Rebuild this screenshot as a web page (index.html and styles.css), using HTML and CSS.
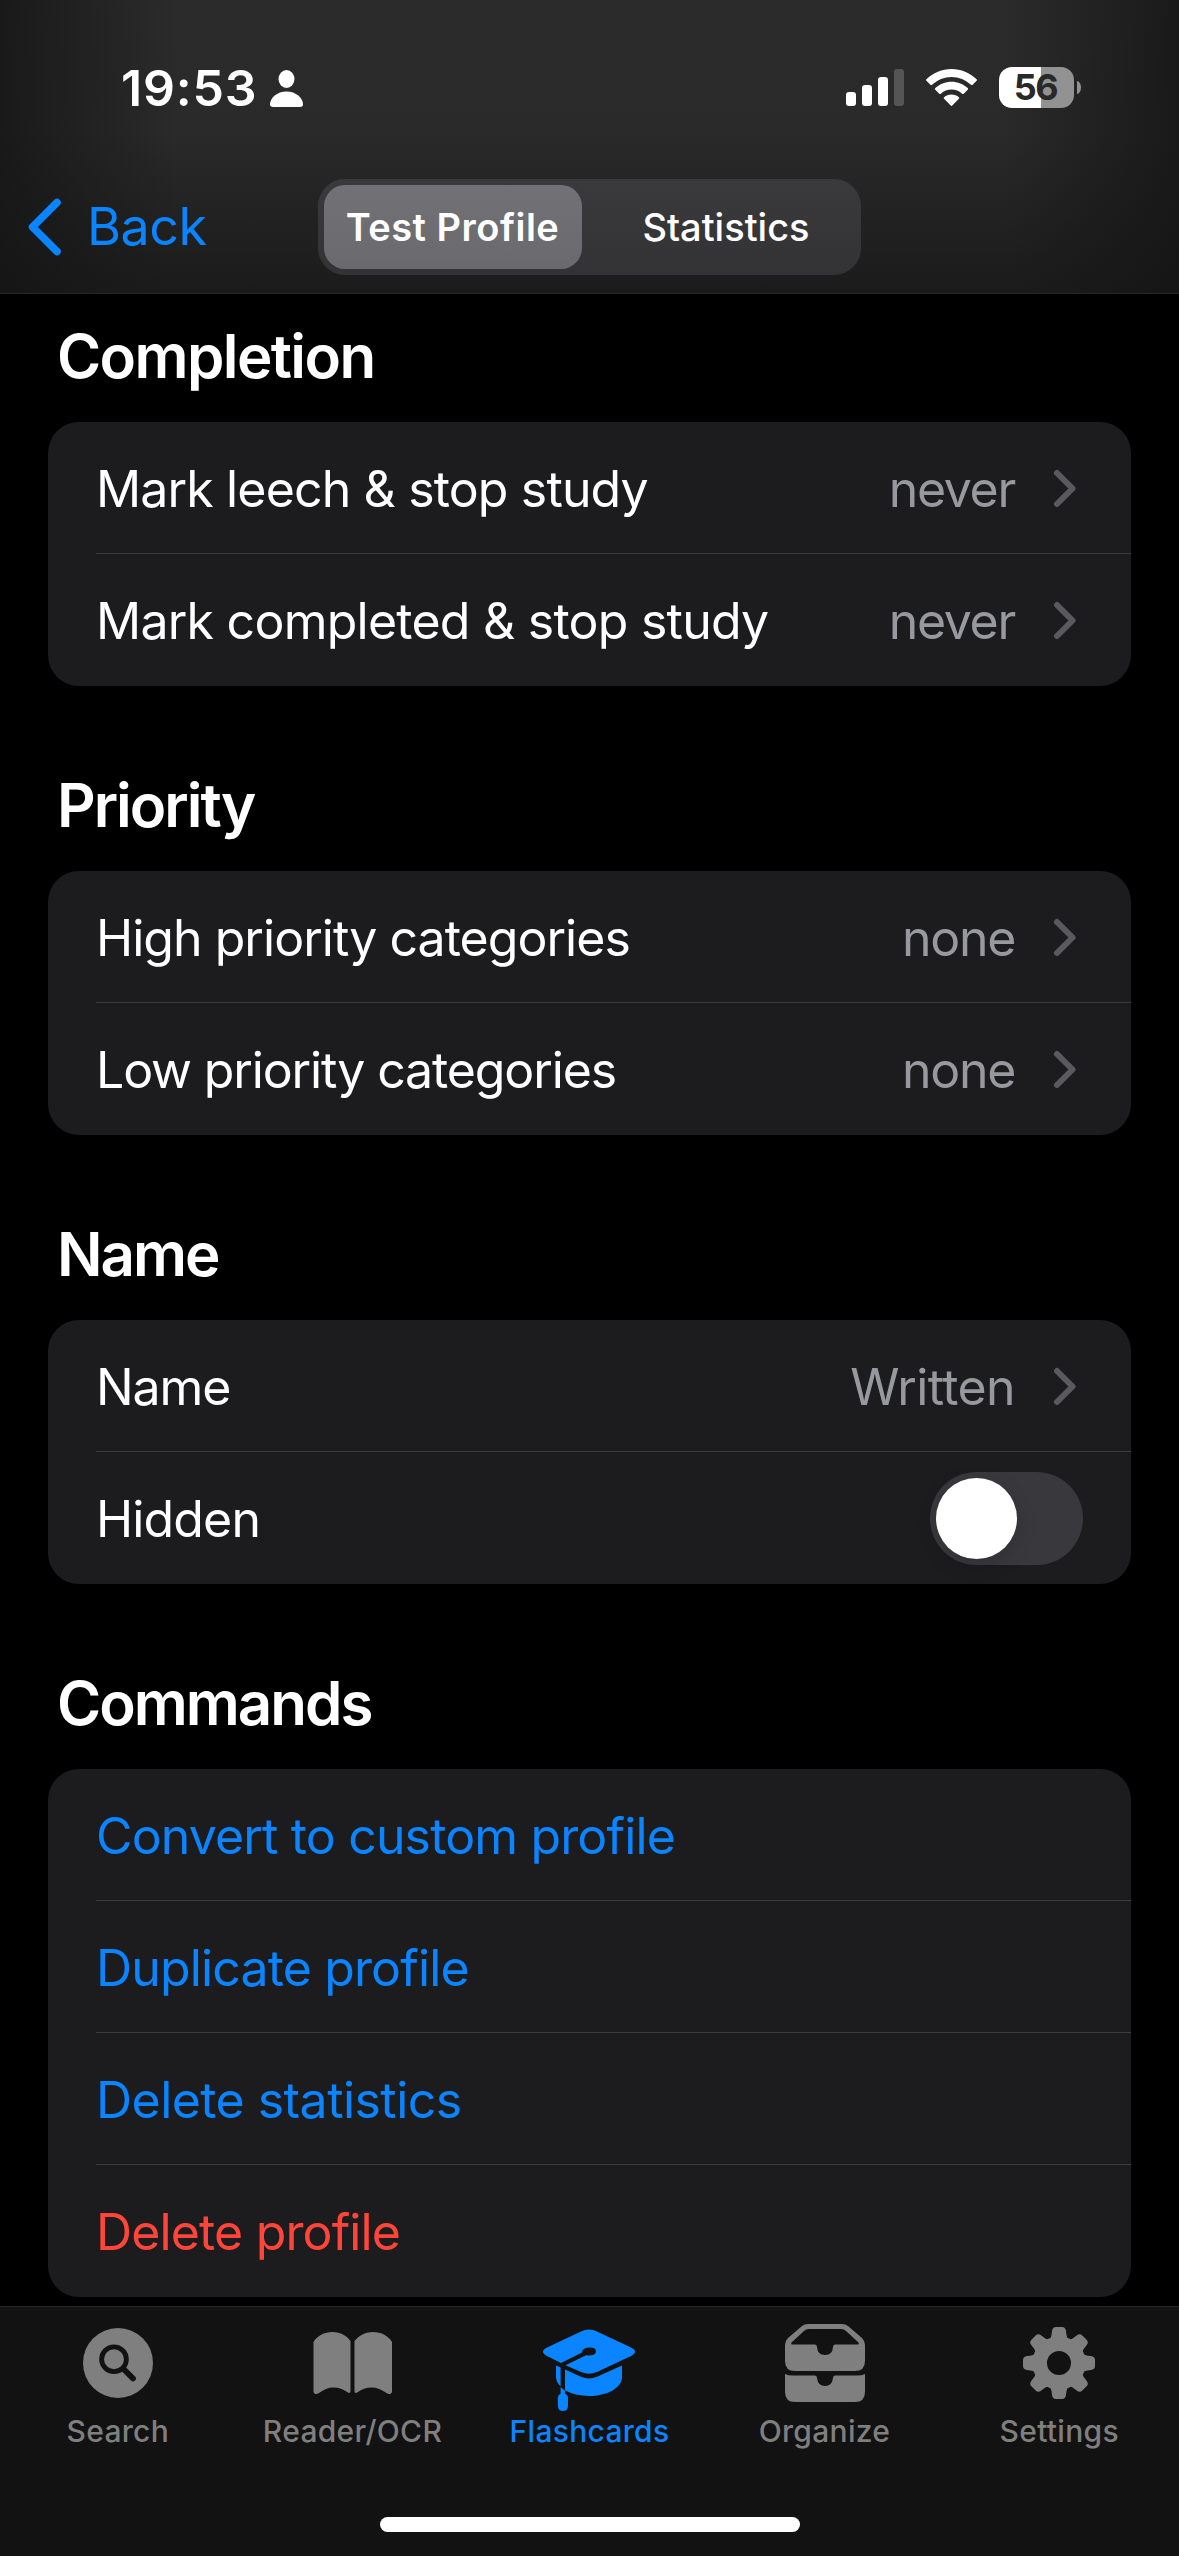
FILE: index.html
```html
<!DOCTYPE html>
<html lang="en">
<head>
<meta charset="utf-8">
<title>Test Profile</title>
<link rel="stylesheet" href="styles.css">
</head>
<body>
<div class="screen">
  <header class="header">
    <div class="status">
      <div class="status-left">
        <span class="time">19:53</span>
        <svg class="person" width="33" height="37" viewBox="0 0 33 37" fill="#fff"><ellipse cx="16.500" cy="9" rx="8" ry="9"/><path d="M3 37C1 37 0 36 0 34.500C0 28 7 21.500 16.500 21.500S33 28 33 34.500C33 36 32 37 30 37Z"/></svg>
      </div>
      <div class="status-right">
        <svg class="signal" width="58" height="37" viewBox="0 0 58 37" fill="#fff"><rect x="0" y="23" width="10" height="14" rx="3"/><rect x="16" y="16" width="10" height="21" rx="3"/><rect x="32" y="8" width="10" height="29" rx="3"/><rect x="48" y="0" width="10" height="37" rx="3" fill="#555556"/></svg>
        <svg class="wifi" width="51" height="37" viewBox="0 0 51 37" fill="#fff"><path d="M25.500 0C16 0 7 3.800.4 10.200a1.100 1.100 0 0 0 0 1.600l4 4a1.100 1.100 0 0 0 1.600 0A28 28 0 0 1 45 15.800a1.100 1.100 0 0 0 1.600 0l4-4a1.100 1.100 0 0 0 0-1.600C44 3.800 35 0 25.500 0Z"/><path d="M25.500 12.800c-6.200 0-11.900 2.400-16.200 6.300a1.100 1.100 0 0 0 0 1.600l4 4a1.200 1.200 0 0 0 1.600 0 15.800 15.800 0 0 1 21.200 0 1.200 1.200 0 0 0 1.600 0l4-4a1.100 1.100 0 0 0 0-1.600c-4.300-3.900-10-6.300-16.200-6.300Z"/><path d="M25.500 25.500c-2.800 0-5.400 1-7.400 2.700a1.100 1.100 0 0 0 0 1.600l6.600 6.700a1.100 1.100 0 0 0 1.600 0l6.600-6.700a1.100 1.100 0 0 0 0-1.600c-2-1.700-4.600-2.700-7.400-2.700Z"/></svg>
        <div class="battery"><span class="battery-level">56</span></div>
        <div class="battery-cap"></div>
      </div>
    </div>
    <nav class="navbar">
      <a class="back"><svg width="35" height="58" viewBox="0 0 35 58"><path d="M30 4.500 5.500 29 30 53.500" fill="none" stroke="#0a84ff" stroke-width="7.500" stroke-linecap="round" stroke-linejoin="round"/></svg><span>Back</span></a>
      <div class="segmented">
        <div class="segment selected">Test Profile</div>
        <div class="segment">Statistics</div>
      </div>
    </nav>
  </header>

  <main class="content">
    <section>
      <h2>Completion</h2>
      <div class="card">
        <div class="row"><span class="label">Mark leech &amp; stop study</span><span class="value">never</span><svg class="chevron" viewBox="0 0 22 37"><path d="M3 3 18.500 18.500 3 34"/></svg></div>
        <div class="row"><span class="label wide">Mark completed &amp; stop study</span><span class="value">never</span><svg class="chevron" viewBox="0 0 22 37"><path d="M3 3 18.500 18.500 3 34"/></svg></div>
      </div>
    </section>
    <section>
      <h2 class="tight">Priority</h2>
      <div class="card">
        <div class="row"><span class="label tight">High priority categories</span><span class="value">none</span><svg class="chevron" viewBox="0 0 22 37"><path d="M3 3 18.500 18.500 3 34"/></svg></div>
        <div class="row"><span class="label tighter">Low priority categories</span><span class="value">none</span><svg class="chevron" viewBox="0 0 22 37"><path d="M3 3 18.500 18.500 3 34"/></svg></div>
      </div>
    </section>
    <section>
      <h2 class="tight">Name</h2>
      <div class="card">
        <div class="row"><span class="label tighter">Name</span><span class="value loose">Written</span><svg class="chevron" viewBox="0 0 22 37"><path d="M3 3 18.500 18.500 3 34"/></svg></div>
        <div class="row"><span class="label">Hidden</span><div class="switch"><div class="knob"></div></div></div>
      </div>
    </section>
    <section>
      <h2 class="tight">Commands</h2>
      <div class="card">
        <div class="row"><span class="label link">Convert to custom profile</span></div>
        <div class="row"><span class="label link">Duplicate profile</span></div>
        <div class="row"><span class="label link loose">Delete statistics</span></div>
        <div class="row"><span class="label danger">Delete profile</span></div>
      </div>
    </section>
  </main>

  <footer class="tabbar">
    <div class="tabs">
      <div class="tab">
        <svg width="100" height="90" viewBox="0 0 100 90"><circle cx="50" cy="45" r="35" fill="#7f7f7f"/><circle cx="46" cy="41.300" r="12.400" fill="none" stroke="#121212" stroke-width="4.800"/><path d="M55.500 51 65 60.500" stroke="#121212" stroke-width="5.800" stroke-linecap="round"/></svg>
        <span>Search</span>
      </div>
      <div class="tab">
        <svg width="100" height="90" viewBox="0 0 100 90" fill="#7f7f7f"><path d="M10.500 24C14 18 21 14 29.500 14S44 18 47.500 23V73c0 2-1.500 2.500-3 1.300C40 71 36 69.500 30.500 69.500S21 71.500 16 75C13.500 77 10.500 76 10.500 73.500Z"/><path d="M89 24C85.500 18 78.500 14 70 14S55.500 18 51.500 23V73c0 2 1.500 2.500 3 1.300C59 71 63 69.500 68.500 69.500S78.500 71.500 83.500 75C86 77 89 76 89 73.500Z"/></svg>
        <span>Reader/OCR</span>
      </div>
      <div class="tab active">
        <svg width="108" height="90" viewBox="1 0 108 90" fill="#0a84ff"><path d="M46 13.500Q54 9.500 62 13.500L96 29.500Q104 33.500 96 38L62 54Q54 57.500 46 54L30.500 47.300 51 37.300Q61 38 61 33.500T54 29.500 47 34.500L26 45 12 38Q4 33.500 12 29.500Z"/><path d="M21 47.500 25.600 49.600V68.500Q21 64 21 59Z"/><path d="M30 51.500 46 58.800Q54 62 62 58.800L87 47.500V59C87 70 72 78 54 78Q40 78 30 72.300Z"/><path d="M25.600 69 30 72.800V75.500Q33 77 33 80V87.500Q33 93 28 93T22.800 87.500V80Q22.800 77 25.600 75.500Z"/></svg>
        <span>Flashcards</span>
      </div>
      <div class="tab">
        <svg width="100" height="90" viewBox="0 0 100 90" fill="#7f7f7f"><path fill-rule="evenodd" d="M27 8Q29.500 6 33 6H67Q70.500 6 73 8L87 20Q90 23 90 27V43Q90 53 80 53H20Q10 53 10 43V27Q10 23 13 20ZM34 11Q31 11 29 13L16.500 24.500Q15.500 26.500 17.500 26.500H40Q42 26.500 42 29 42.500 37 50 37T58 29Q58 26.500 60 26.500H82.500Q84.500 26.500 83.500 24.500L71 13Q69 11 66 11Z"/><path d="M10 56Q13 57.500 18 57.500H40Q42 57.500 42 60 43 68 50 68T58 60Q58 57.500 60 57.500H82Q87 57.500 90 56V74Q90 84 80 84H20Q10 84 10 74Z"/></svg>
        <span>Organize</span>
      </div>
      <div class="tab">
        <svg width="100" height="90" viewBox="-50 -45 100 90" fill="#7f7f7f"><defs><path id="tooth" d="M-10 -23 Q-7.500 -25 -7 -32 Q-6.500 -36 -3 -36H3Q6.500 -36 7 -32 Q7.500 -25 10 -23Z"/></defs><circle r="19.300" fill="none" stroke="#7f7f7f" stroke-width="14.500"/><use href="#tooth"/><use href="#tooth" transform="rotate(45)"/><use href="#tooth" transform="rotate(90)"/><use href="#tooth" transform="rotate(135)"/><use href="#tooth" transform="rotate(180)"/><use href="#tooth" transform="rotate(225)"/><use href="#tooth" transform="rotate(270)"/><use href="#tooth" transform="rotate(315)"/></svg>
        <span>Settings</span>
      </div>
    </div>
    <div class="home-indicator"></div>
  </footer>
</div>
</body>
</html>
```
FILE: styles.css
```css
* { box-sizing: border-box; }
body { margin: 0; background: #000; color: #fff; font-family: Inter, "Liberation Sans", sans-serif; }
svg { display: block; flex: none; overflow: visible; }
.screen { width: 1179px; height: 2556px; display: flex; flex-direction: column; overflow: hidden; }

.header {
  height: 294px; flex: none; border-bottom: 1px solid #272728;
  background:
    linear-gradient(to right, rgba(20,20,20,.75), rgba(20,20,20,0) 15%, rgba(20,20,20,0) 85%, rgba(20,20,20,.75)),
    linear-gradient(to bottom, #2b2b2c, #2a2a2b 45%, #1b1b1b);
}
.status { height: 179px; display: flex; justify-content: space-between; padding: 67px 98px 0 121px; }
.status-left, .status-right { display: flex; align-items: flex-start; }
.time { font-size: 50px; line-height: 43px; font-weight: 600; width: 149px; white-space: nowrap; letter-spacing: .8px; }
.person { margin-top: 3px; }
.signal { margin: 2px 22px 0 0; }
.wifi { margin: 2px 22px 0 0; }
.battery { width: 75px; height: 41px; border-radius: 13px; background: linear-gradient(to right, #fff 42px, #929293 42px); display: flex; align-items: center; justify-content: center; }
.battery-level { color: #29292a; font-size: 36px; line-height: 41px; font-weight: 650; letter-spacing: -1.5px; margin-right: 2px; }
.battery-cap { width: 4px; height: 13px; margin: 14px 0 0 3px; background: #929293; border-radius: 0 4px 4px 0 / 0 6.5px 6.5px 0; }

.navbar { display: flex; align-items: center; height: 96px; padding-left: 27px; }
.back { display: flex; align-items: center; gap: 25px; width: 291px; color: #0a84ff; font-size: 52px; letter-spacing: -.5px; }
.back span { margin-top: -2px; }
.segmented { width: 543px; height: 96px; padding: 6px; border-radius: 27px; background: linear-gradient(#3a3a3d, #333336); display: flex; }
.segment { flex: 1; display: flex; align-items: center; justify-content: center; padding-left: 15px; font-size: 38px; font-weight: 450; white-space: nowrap; }
.segment.selected { flex: 0 0 258px; padding: 0 1px 0 0; border-radius: 21px; background: linear-gradient(#717176, #69696e); font-weight: 600; letter-spacing: .5px; }

.content { height: 2012px; flex: none; padding: 0 48px; }
section { height: 449px; }
section:first-child { height: 448px; }
h2 { margin: 0; height: 129px; padding: 27px 0 0 9px; font-size: 60px; line-height: 72px; font-weight: 600; letter-spacing: -1.6px; }
h2.tight { letter-spacing: -2px; }
section:first-child h2 { height: 128px; padding-top: 26px; }
.card { background: #1c1c1e; border-radius: 31px; overflow: hidden; }
.row { height: 132px; margin-left: 48px; padding-right: 48px; display: flex; align-items: center; border-bottom: 1px solid #3c3c3f; font-size: 50px; }
.row:last-child { border-bottom: 0; }
.label { flex: 1; padding-top: 2px; white-space: nowrap; letter-spacing: -.85px; }
.label.wide { letter-spacing: -.75px; }
.label.tight { letter-spacing: -.97px; }
.label.tighter { letter-spacing: -1.13px; }
.label.loose { letter-spacing: -.55px; }
.value { padding-top: 2px; color: #98989f; margin-right: 39px; letter-spacing: -1.3px; }
.value.loose { letter-spacing: -.6px; }
.chevron { width: 22px; height: 37px; fill: none; stroke: #5a5a5e; stroke-width: 6; stroke-linecap: round; stroke-linejoin: round; margin: 1px 7px 0 0; }
.link { color: #0a84ff; }
.danger { color: #ff453a; }
.switch { width: 153px; height: 93px; padding: 6px; border-radius: 47px; background: #39393d; }
.knob { width: 81px; height: 81px; border-radius: 50%; background: #fff; box-shadow: 0 6px 20px rgba(0,0,0,.15); }

.tabbar { height: 250px; background: #121212; border-top: 1px solid #272728; display: flex; flex-direction: column; align-items: center; }
.tabs { width: 100%; height: 210px; padding-top: 11px; display: grid; grid-template-columns: 235.5fr 234fr 240fr 230fr 239.5fr; }
.tab { display: flex; flex-direction: column; align-items: center; gap: 5px; color: #7f7f7f; font-size: 30px; font-weight: 500; letter-spacing: .3px; }
.tab span { line-height: 36px; }
.tab.active { color: #0a84ff; }
.home-indicator { width: 420px; height: 15px; border-radius: 8px; background: #fff; }
```
